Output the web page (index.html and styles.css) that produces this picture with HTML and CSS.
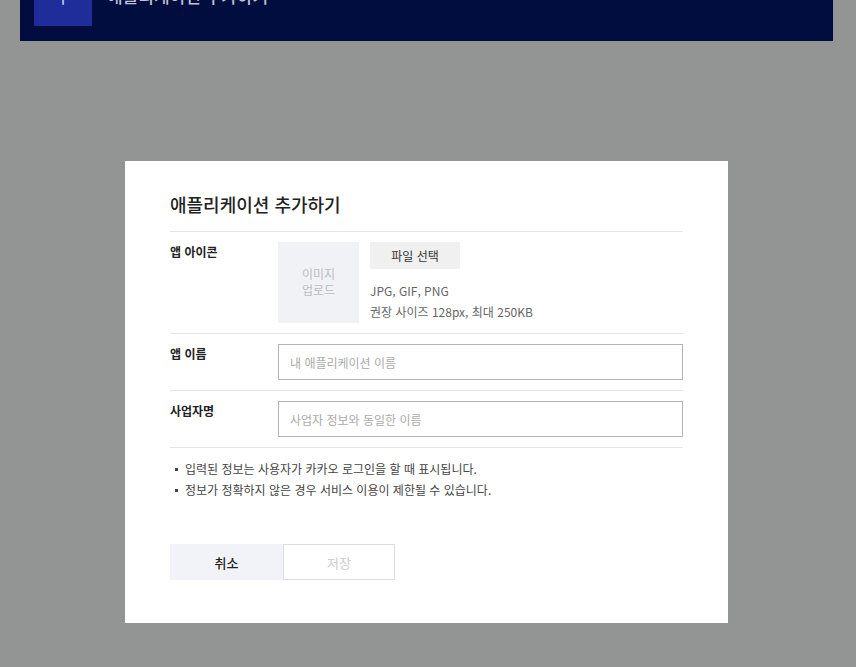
FILE: index.html
```html
<!DOCTYPE html>
<html lang="ko">
<head>
    <meta charset="UTF-8">
    <meta name="viewport" content="width=device-width, initial-scale=1.0">
    <title>애플리케이션 추가하기</title>
    <link rel="stylesheet" href="styles.css">
</head>
<body>
    <div class="page-header">
        <div class="add-icon">+</div>
        <h1>애플리케이션 추가하기</h1>
    </div>

    <div id="app-modal">
        <div class="modal-content">
            <h2>애플리케이션 추가하기</h2>

            <div class="form-row">
                <div class="form-label">앱 아이콘</div>
                <div class="icon-field">
                    <div class="icon-preview">이미지<br>업로드</div>
                    <div class="icon-info">
                        <button class="file-button">파일 선택</button>
                        <p>JPG, GIF, PNG<br>권장 사이즈 128px, 최대 250KB</p>
                    </div>
                </div>
            </div>

            <div class="form-row">
                <div class="form-label">앱 이름</div>
                <input type="text" placeholder="내 애플리케이션 이름">
            </div>

            <div class="form-row">
                <div class="form-label">사업자명</div>
                <input type="text" placeholder="사업자 정보와 동일한 이름">
            </div>

            <ul class="notes">
                <li>입력된 정보는 사용자가 카카오 로그인을 할 때 표시됩니다.</li>
                <li>정보가 정확하지 않은 경우 서비스 이용이 제한될 수 있습니다.</li>
            </ul>

            <div class="modal-buttons">
                <button class="btn-cancel">취소</button>
                <button class="btn-save" disabled>저장</button>
            </div>
        </div>
    </div>
</body>
</html>
```

FILE: styles.css
```css
* {
    margin: 0;
    padding: 0;
    box-sizing: border-box;
}

body {
    font-family: "Noto Sans CJK KR", "Noto Sans", sans-serif;
    background-color: #939494;
    height: 100vh;
    padding: 0 23px 0 20px;
    overflow: hidden;
}

.page-header {
    background: #010d3f;
    height: 67px;
    margin-top: -26px;
    padding-left: 14px;
    display: flex;
    align-items: flex-start;
    gap: 15px;
    color: #bfc3d6;
}

.add-icon {
    width: 58px;
    height: 52px;
    background: #1e2d9a;
    color: #c9cde6;
    font-size: 30px;
    font-weight: 300;
    line-height: 42px;
    text-align: center;
}

.page-header h1 {
    font-size: 17px;
    font-weight: 500;
    line-height: 44px;
}

#app-modal {
    position: fixed;
    top: 0;
    left: 0;
    right: 0;
    bottom: 0;
    padding-top: 161px;
    padding-left: 125px;
}

.modal-content {
    background: white;
    width: 603px;
    height: 462px;
    padding: 30px 45px 0;
    color: #222;
}

.modal-content h2 {
    font-size: 18px;
    font-weight: 500;
    line-height: 26px;
    padding-bottom: 14px;
    border-bottom: 1px solid #e5e5e5;
}

.form-row {
    display: flex;
    padding: 10px 0;
    border-bottom: 1px solid #e5e5e5;
}

.form-label {
    width: 108px;
    flex-shrink: 0;
    font-size: 12px;
    font-weight: 700;
    line-height: 20px;
}

.icon-field {
    display: flex;
    gap: 11px;
}

.icon-preview {
    width: 81px;
    height: 81px;
    background: #f1f2f6;
    color: #b9bcc4;
    font-size: 12px;
    line-height: 16px;
    text-align: center;
    padding-top: 24px;
}

.file-button {
    width: 90px;
    height: 27px;
    border: none;
    background: #f0f0f0;
    color: #333;
    font-family: inherit;
    font-size: 12px;
}

.icon-info p {
    margin-top: 11px;
    font-size: 12px;
    line-height: 21px;
    color: #666;
}

.form-row input {
    flex-grow: 1;
    height: 36px;
    border: 1px solid #b4b4b4;
    padding: 0 11px;
    font-family: inherit;
    font-size: 12px;
    outline: none;
}

.form-row input::placeholder {
    color: #aaa;
}

.notes {
    list-style: none;
    margin-top: 10px;
    font-size: 12px;
    line-height: 21px;
    color: #444;
}

.notes li {
    position: relative;
    padding-left: 15px;
}

.notes li::before {
    content: "";
    position: absolute;
    left: 5px;
    top: 10px;
    width: 3px;
    height: 3px;
    background: #444;
}

.modal-buttons {
    display: flex;
    margin-top: 44px;
}

.modal-buttons button {
    width: 113px;
    height: 36px;
    font-family: inherit;
    font-size: 13px;
    cursor: pointer;
}

.btn-cancel {
    background: #f1f3f8;
    border: none;
    color: #222;
    font-weight: 500;
}

.btn-save {
    background: white;
    border: 1px solid #ddd;
    color: #ccc;
    width: 112px !important;
}
```
